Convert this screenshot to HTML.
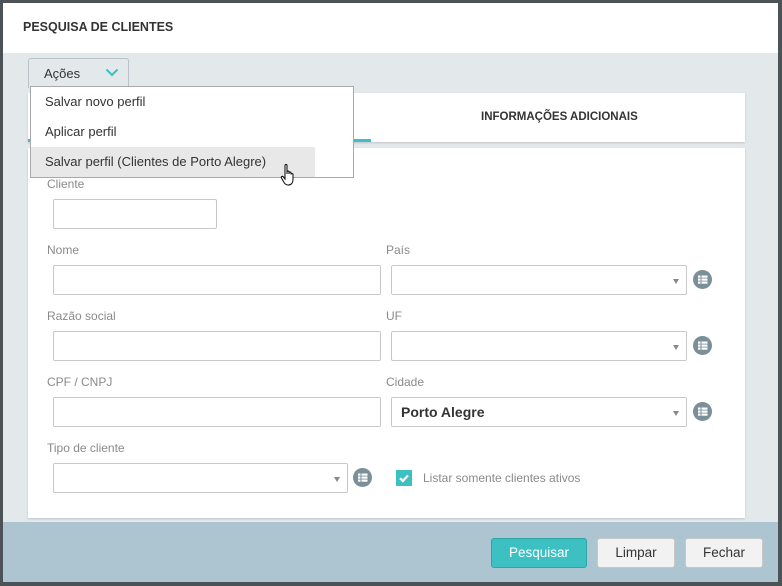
<!DOCTYPE html>
<html><head><meta charset="utf-8"><style>
*{box-sizing:border-box;margin:0;padding:0}
body{width:782px;height:586px;background:#4b5357;font-family:"Liberation Sans",sans-serif;position:relative;overflow:hidden}
.a{position:absolute}
.dlg{left:3px;top:3px;width:775px;height:579px;background:#e3e8ea}
.lbl{font-size:12px;color:#8a8a8a}
.inp{background:#fff;border:1px solid #c8c8c8;border-radius:2px;height:30px}
.sel::after{content:"";position:absolute;right:7px;top:13px;border-left:3px solid transparent;border-right:3px solid transparent;border-top:5px solid #888}
.btn{height:30px;border:1px solid #c8c8c8;border-radius:3px;background:#f2f2f2;font-size:13.5px;color:#333;text-align:center;line-height:28px}
</style></head><body>
<div class="a dlg"></div>
<div class="a" style="left:3px;top:3px;width:775px;height:50px;background:#fff"></div>
<div class="a" style="left:23px;top:20px;font-size:12.5px;font-weight:bold;color:#333">PESQUISA DE CLIENTES</div>
<div class="a" style="left:3px;top:522px;width:775px;height:60px;background:#adc5d1"></div>
<div class="a" style="left:28px;top:93px;width:717px;height:49px;background:#fff;box-shadow:0 1px 2px rgba(0,0,0,.15)"></div>
<div class="a" style="left:28px;top:139px;width:343px;height:3px;background:#3cc0c2"></div>
<div class="a" style="left:481px;top:111px;font-size:11.5px;font-weight:bold;color:#333">INFORMAÇÕES ADICIONAIS</div>
<div class="a" style="left:28px;top:148px;width:717px;height:370px;background:#fff;box-shadow:0 1px 2px rgba(0,0,0,.15)"></div>
<div class="a lbl" style="left:47px;top:177px">Cliente</div>
<div class="a inp" style="left:53px;top:199px;width:164px"></div>
<div class="a lbl" style="left:47px;top:243px">Nome</div>
<div class="a inp" style="left:53px;top:265px;width:328px"></div>
<div class="a lbl" style="left:386px;top:243px">País</div>
<div class="a inp sel" style="left:391px;top:265px;width:296px"></div>
<div class="a lbl" style="left:47px;top:309px">Razão social</div>
<div class="a inp" style="left:53px;top:331px;width:328px"></div>
<div class="a lbl" style="left:386px;top:309px">UF</div>
<div class="a inp sel" style="left:391px;top:331px;width:296px"></div>
<div class="a lbl" style="left:47px;top:375px">CPF / CNPJ</div>
<div class="a inp" style="left:53px;top:397px;width:328px"></div>
<div class="a lbl" style="left:386px;top:375px">Cidade</div>
<div class="a inp sel" style="left:391px;top:397px;width:296px;font-size:14px;font-weight:bold;color:#333;padding:6px 9px">Porto Alegre</div>
<div class="a lbl" style="left:47px;top:441px">Tipo de cliente</div>
<div class="a inp sel" style="left:53px;top:463px;width:295px"></div>
<svg class="a" style="left:693px;top:270px" width="19" height="19" viewBox="0 0 19 19"><circle cx="9.5" cy="9.5" r="9.5" fill="#7b8f98"/><g fill="#fff"><rect x="5" y="5.5" width="2.5" height="2.2"/><rect x="8.5" y="5.5" width="6" height="2.2"/><rect x="5" y="8.5" width="2.5" height="2.2"/><rect x="8.5" y="8.5" width="6" height="2.2"/><rect x="5" y="11.5" width="2.5" height="2.2"/><rect x="8.5" y="11.5" width="6" height="2.2"/></g></svg>
<svg class="a" style="left:693px;top:336px" width="19" height="19" viewBox="0 0 19 19"><circle cx="9.5" cy="9.5" r="9.5" fill="#7b8f98"/><g fill="#fff"><rect x="5" y="5.5" width="2.5" height="2.2"/><rect x="8.5" y="5.5" width="6" height="2.2"/><rect x="5" y="8.5" width="2.5" height="2.2"/><rect x="8.5" y="8.5" width="6" height="2.2"/><rect x="5" y="11.5" width="2.5" height="2.2"/><rect x="8.5" y="11.5" width="6" height="2.2"/></g></svg>
<svg class="a" style="left:693px;top:402px" width="19" height="19" viewBox="0 0 19 19"><circle cx="9.5" cy="9.5" r="9.5" fill="#7b8f98"/><g fill="#fff"><rect x="5" y="5.5" width="2.5" height="2.2"/><rect x="8.5" y="5.5" width="6" height="2.2"/><rect x="5" y="8.5" width="2.5" height="2.2"/><rect x="8.5" y="8.5" width="6" height="2.2"/><rect x="5" y="11.5" width="2.5" height="2.2"/><rect x="8.5" y="11.5" width="6" height="2.2"/></g></svg>
<svg class="a" style="left:353px;top:468px" width="19" height="19" viewBox="0 0 19 19"><circle cx="9.5" cy="9.5" r="9.5" fill="#7b8f98"/><g fill="#fff"><rect x="5" y="5.5" width="2.5" height="2.2"/><rect x="8.5" y="5.5" width="6" height="2.2"/><rect x="5" y="8.5" width="2.5" height="2.2"/><rect x="8.5" y="8.5" width="6" height="2.2"/><rect x="5" y="11.5" width="2.5" height="2.2"/><rect x="8.5" y="11.5" width="6" height="2.2"/></g></svg>
<svg class="a" style="left:396px;top:470px" width="16" height="16" viewBox="0 0 16 16"><rect width="16" height="16" fill="#3cc0c2"/><path d="M4 8.2l2.8 2.8L12 5.5" stroke="#fff" stroke-width="2.2" fill="none"/></svg>
<div class="a lbl" style="left:423px;top:471px">Listar somente clientes ativos</div>
<div class="a btn" style="left:491px;top:538px;width:96px;background:#3cc0c2;border-color:#2ea6a8;color:#fff">Pesquisar</div>
<div class="a btn" style="left:597px;top:538px;width:78px">Limpar</div>
<div class="a btn" style="left:685px;top:538px;width:78px">Fechar</div>
<div class="a" style="left:28px;top:58px;width:101px;height:30px;background:#e3e8ea;border:1px solid #b8c2c8;border-bottom:none;border-radius:3px 3px 0 0;font-size:13px;color:#333;padding:7px 0 0 15px">Ações</div>
<svg class="a" style="left:105px;top:68px" width="14" height="9" viewBox="0 0 14 9"><path d="M1.5 1.5L7 7l5.5-5.5" stroke="#3cc0c2" stroke-width="2" fill="none"/></svg>
<div class="a" style="left:30px;top:86px;width:324px;height:92px;background:#fff;border:1px solid #a9a9a9"></div>
<div class="a" style="left:31px;top:147px;width:284px;height:30px;background:#e8e8e8"></div>
<div class="a" style="left:45px;top:94px;font-size:13px;color:#333">Salvar novo perfil</div>
<div class="a" style="left:45px;top:124px;font-size:13px;color:#333">Aplicar perfil</div>
<div class="a" style="left:45px;top:154px;font-size:13px;color:#333">Salvar perfil (Clientes de Porto Alegre)</div>
<svg class="a" style="left:280px;top:163px" width="18" height="24" viewBox="0 0 18 24"><path d="M5 2.5c0-1.3 2-1.3 2 0V11V9c0-1.3 2-1.3 2 0v2-1c0-1.3 2-1.3 2 0v1.5c0-1.2 2-1.2 2 0V17c0 3-2 5-4.5 5H8c-2 0-3-1-4-2.5L1.5 15c-.8-1.2.8-2.3 1.8-1.2L5 16z" fill="#fff" stroke="#000" stroke-width="1"/></svg>
</body></html>
